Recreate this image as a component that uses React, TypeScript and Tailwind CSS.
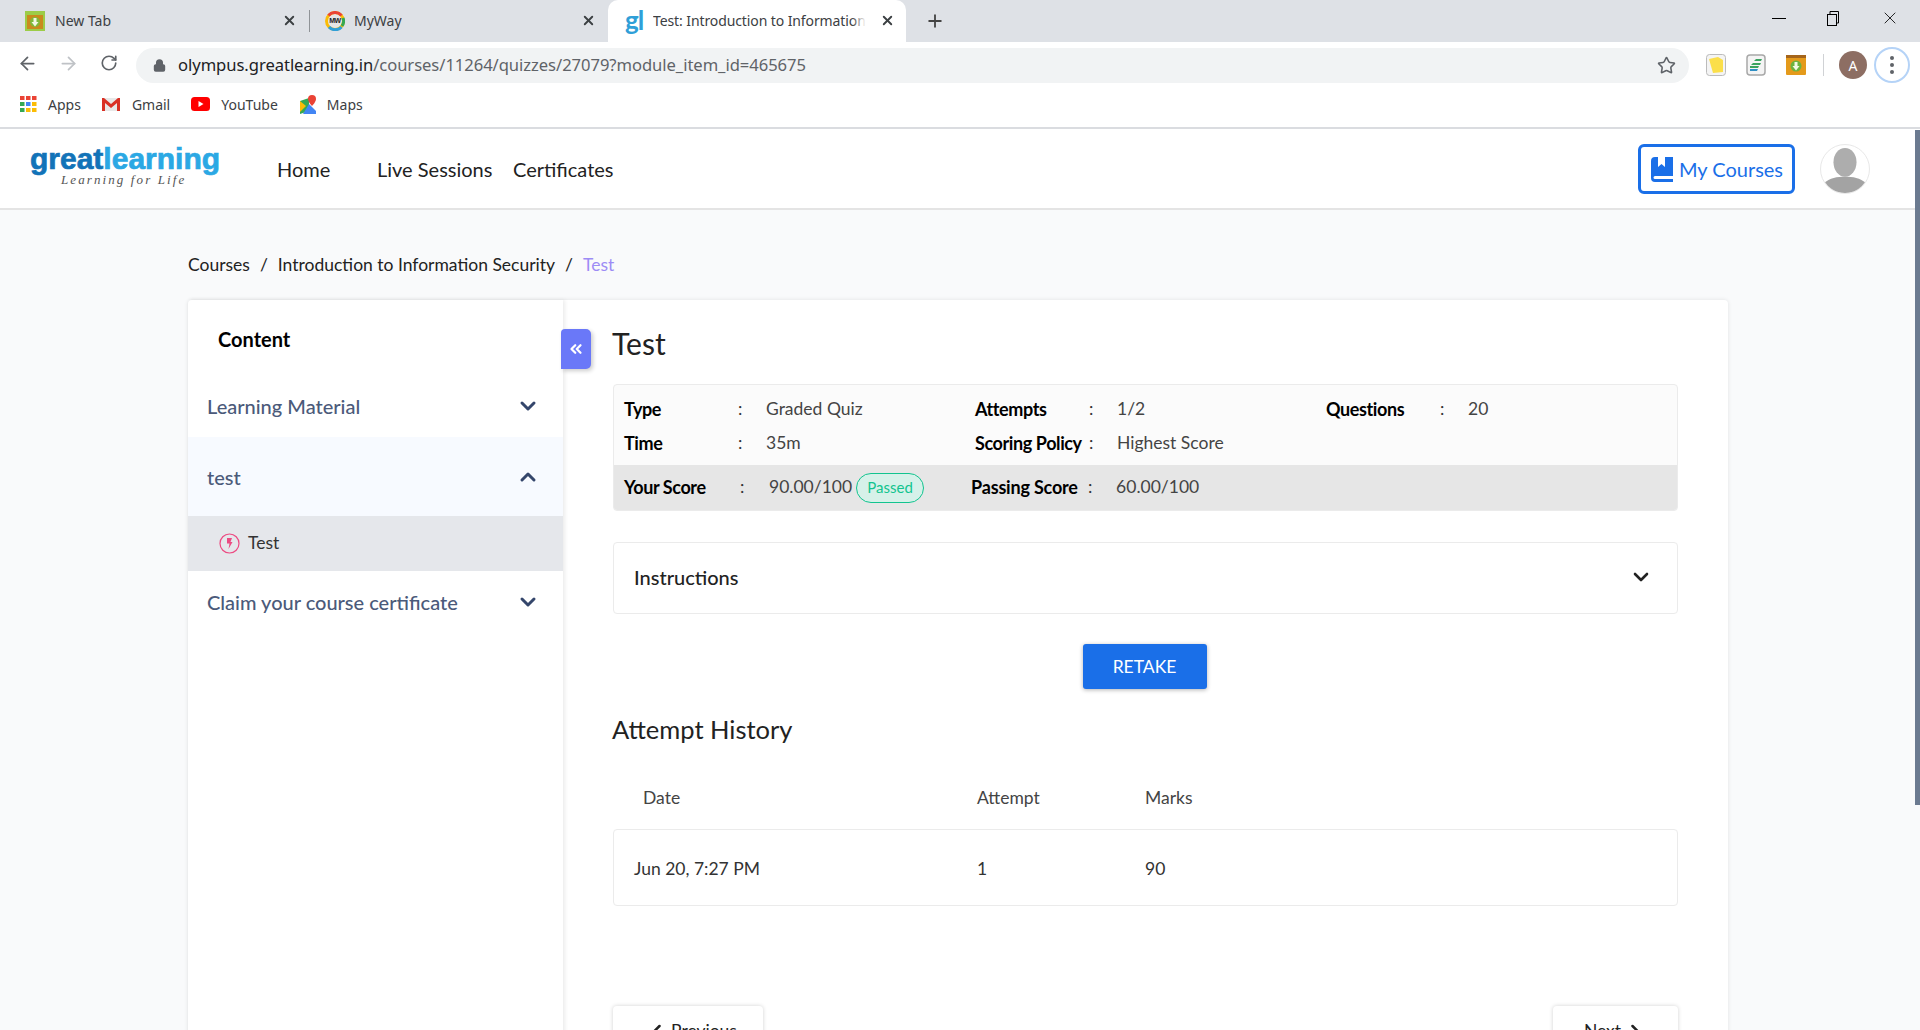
import { ChevronDown, ChevronLeft, ChevronRight, ChevronUp, ChevronsLeft, Lock, Plus, RotateCw, Star, ArrowLeft, ArrowRight, X } from "lucide-react";

function BrowserTab({ icon, title, width, close }: { icon: React.ReactNode; title: string; width: string; close: string }) {
  return (
    <div className={`relative flex h-full items-center ${width}`}>
      {icon}
      <span className="overflow-hidden whitespace-nowrap pb-[1px] text-[14px] text-[#3c4043]">{title}</span>
      <X size={15} strokeWidth={3} className={`absolute top-[13px] text-[#3c4043] ${close}`} />
    </div>
  );
}

function NewTabIcon() {
  return (
    <svg width="20" height="20" viewBox="0 0 20 20" className="ml-[25px] mr-[10px] shrink-0">
      <rect x="0" y="0" width="20" height="20" fill="#9ccc48" />
      <rect x="2" y="4" width="16" height="14" fill="#c98a1d" />
      <circle cx="10" cy="11" r="5" fill="#7fb83a" />
      <path d="M8.500 7h3v4h2L10 15.500 6.500 11h2z" fill="#f2f8e4" />
    </svg>
  );
}

function MyWayIcon() {
  return (
    <div className="relative ml-[15px] mr-[9px] flex h-[20px] w-[20px] shrink-0 items-center justify-center">
      <svg width="20" height="20" viewBox="0 0 20 20" className="absolute inset-0">
        <circle cx="10" cy="10" r="8.500" fill="#e6e6e6" stroke="#fbbc05" strokeWidth="3" />
        <path d="M3.500 4.500a8.500 8.500 0 0 1 13 0" fill="none" stroke="#ea4335" strokeWidth="3" />
        <path d="M18 7a8.500 8.500 0 0 1-1 8" fill="none" stroke="#34a853" strokeWidth="3" />
        <path d="M4 16a8.500 8.500 0 0 0 12.500 0" fill="none" stroke="#2f9fd8" strokeWidth="3" />
      </svg>
      <span className="relative font-['Liberation_Sans',sans-serif] text-[7px] font-bold tracking-[-0.5px] text-[#222]">MW</span>
    </div>
  );
}

function AppsIcon() {
  const colors = ["#ea4335", "#ea4335", "#ea4335", "#34a853", "#4285f4", "#fbbc05", "#34a853", "#fbbc05", "#fbbc05"];
  return (
    <div className="mr-[10px] grid h-[17px] w-[17px] grid-cols-3 gap-[1.500px]">
      {colors.map((c, i) => (
        <svg key={i} viewBox="0 0 4 4" className="h-[4.500px] w-[4.500px]">
          <rect width="4" height="4" fill={c} />
        </svg>
      ))}
    </div>
  );
}

function InfoCell({ label, value }: { label: string; value: string }) {
  return (
    <div className="flex h-[34px] w-[351px] items-center">
      <span className="w-[114px] text-[18px] font-bold tracking-[-0.4px] text-black">{label}</span>
      <span className="w-[28px] text-[17.500px] text-[#333]">:</span>
      <span className="text-[17.500px] text-[#444]">{value}</span>
    </div>
  );
}

function SectionRow({ title, open }: { title: string; open?: boolean }) {
  return (
    <div className={`flex items-center justify-between pl-[19px] pr-[23px] ${open ? "h-[79px] bg-[#f7faff]" : "h-[62px]"}`}>
      <span className="text-[20px] font-medium text-[#4b5a7a]">{title}</span>
      {open ? <ChevronUp size={24} strokeWidth={3} className="text-[#34466b]" /> : <ChevronDown size={24} strokeWidth={3} className="text-[#34466b]" />}
    </div>
  );
}

export default function App() {
  return (
    <div className="relative h-[1030px] w-[1920px] overflow-hidden bg-white font-['Lato',sans-serif]">
      {/* browser chrome */}
      <div className="font-['Noto_Sans',sans-serif]">
        <div className="flex h-[42px] bg-[#dee1e6]">
          <BrowserTab width="w-[309px]" icon={<NewTabIcon />} title="New Tab" close="left-[282px]" />
          <div className="my-[10px] w-px bg-[#8f9397]" />
          <BrowserTab width="w-[298px]" icon={<MyWayIcon />} title="MyWay" close="left-[271px]" />
          <div className="relative flex h-full w-[298px] items-center rounded-t-[10px] bg-white pl-[17px]">
            <span className="mb-[3px] mr-[10px] w-[18px] font-['Lato',sans-serif] text-[26px] font-bold leading-none tracking-[-1px] text-[#2f9fd8]">gl</span>
            <span className="w-[213px] overflow-hidden whitespace-nowrap pb-[1px] text-[14px] tracking-[-0.1px] text-[#3c4043]">Test: Introduction to Information Security</span>
            <div className="absolute left-[244px] top-0 h-full w-[14px] bg-gradient-to-r from-white/0 to-white" />
            <X size={15} strokeWidth={3} className="absolute left-[272px] top-[13px] text-[#3c4043]" />
          </div>
          <Plus size={20} strokeWidth={2.200} className="ml-[19px] mt-[11px] text-[#444]" />
          <div className="ml-auto flex items-center gap-[38px] pb-[6px] pr-[20px] text-[#222]">
            <div className="h-px w-[14px] bg-black" />
            <svg width="18" height="18" viewBox="0 0 18 18" fill="none" stroke="black">
              <rect x="3.500" y="5.500" width="9" height="11" />
              <path d="M6 5V2.500h8.500V14H13" />
            </svg>
            <X size={20} strokeWidth={1} className="text-black" />
          </div>
        </div>
        <div className="flex h-[42px] items-center">
          <ArrowLeft size={21} className="ml-[17px] text-[#5f6368]" />
          <ArrowRight size={21} className="ml-[20px] text-[#bfc2c6]" />
          <RotateCw size={18} strokeWidth={2.200} className="ml-[21px] text-[#5f6368]" />
          <div className="ml-[18px] mt-[4px] flex h-[35px] w-[1553px] items-center rounded-full bg-[#f1f3f4] pl-[17px] pr-[13px]">
            <Lock size={13} strokeWidth={3} className="text-[#5f6368]" fill="#5f6368" />
            <span className="ml-[12px] text-[16.600px] tracking-[-0.05px] text-[#202124]">
              olympus.greatlearning.in<span className="text-[#5f6368]">/courses/11264/quizzes/27079?module_item_id=465675</span>
            </span>
            <Star size={19} strokeWidth={2} className="ml-auto text-[#5f6368]" />
          </div>
          <div className="ml-[17px] mt-[4px] flex items-center">
            <svg width="20" height="22" viewBox="0 0 20 22">
              <rect x="0.500" y="0.500" width="19" height="21" rx="3" fill="#f4f4f4" stroke="#bbb" />
              <path d="M3 5l9-2 5 3 0 12-10 1z" fill="#fbdf4a" />
            </svg>
            <svg width="20" height="22" viewBox="0 0 20 22" className="ml-[20px]">
              <rect x="1" y="1" width="18" height="20" rx="3" fill="#f4f4f4" stroke="#a8a8a8" strokeWidth="1.500" />
              <path d="M10 5h6l-1 2H8zM7 9h8l-1 2H5zM4 12h9l-1 2H4z" fill="#3aa35f" />
              <path d="M4 15h8l-1 2H4z" fill="#2f8fc4" />
            </svg>
            <svg width="20" height="20" viewBox="0 0 20 20" className="ml-[20px]">
              <rect width="20" height="20" rx="1" fill="#e49a1b" />
              <rect y="0" width="20" height="3" fill="#a5651b" />
              <circle cx="10" cy="11" r="5.500" fill="#6db33f" />
              <path d="M8.500 7h3v4h2L10 15.500 6.500 11h2z" fill="#f3f9e6" />
            </svg>
            <div className="ml-[17px] h-[22px] w-px bg-[#d0d2d5]" />
            <div className="ml-[15px] flex h-[28px] w-[28px] items-center justify-center rounded-full bg-[#8d6e63] text-[14px] text-white">A</div>
            <div className="ml-[7px] flex h-[36px] w-[36px] flex-col items-center justify-center gap-[3px] rounded-full border-2 border-[#b5d3f7]">
              <div className="h-[4px] w-[4px] rounded-full bg-[#5f6368]" />
              <div className="h-[4px] w-[4px] rounded-full bg-[#5f6368]" />
              <div className="h-[4px] w-[4px] rounded-full bg-[#5f6368]" />
            </div>
          </div>
        </div>
        <div className="flex h-[45px] items-center border-b-2 border-[#dadce0] pb-[3px] pl-[20px] text-[14px] text-[#3c4043]">
          <AppsIcon />
          <span className="ml-[1px]">Apps</span>
          <svg width="18" height="14" viewBox="0 0 18 14" className="ml-[21px]">
            <rect x="1" y="1" width="16" height="13" fill="#e8e8e8" />
            <path d="M0 14V1h2l7 6 7-6h2v13h-3V6L9 11 3 6v8z" fill="#d93025" />
          </svg>
          <span className="ml-[12px]">Gmail</span>
          <svg width="19" height="14" viewBox="0 0 19 14" className="ml-[21px]">
            <rect width="19" height="14" rx="3.500" fill="#f00" />
            <path d="M7.500 4v6l5-3z" fill="#fff" />
          </svg>
          <span className="ml-[11px]">YouTube</span>
          <svg width="18" height="19" viewBox="0 0 18 19" className="ml-[21px]">
            <path d="M1 6l9-3v13l-9 3z" fill="#34a853" />
            <path d="M10 9l7 7v3H4z" fill="#4285f4" />
            <path d="M1 6l6 5-6 6z" fill="#fbbc05" />
            <path d="M13 0a4 4 0 0 1 4 4c0 3-4 7-4 7S9 7 9 4a4 4 0 0 1 4-4z" fill="#ea4335" />
          </svg>
          <span className="ml-[10px]">Maps</span>
        </div>
      </div>

      {/* site header */}
      <header className="flex h-[81px] items-center border-b-2 border-[#e4e4e4] pl-[30px] pt-[1px]">
        <div className="mb-[4px] flex w-[247px] flex-col">
          <div className="font-['Liberation_Sans',sans-serif] text-[30px] font-bold leading-[22px] tracking-[0px] [-webkit-text-stroke:0.7px_currentColor]">
            <span className="text-[#1273b8]">great</span>
            <span className="text-[#2ba8e4]">learning</span>
          </div>
          <div className="ml-[31px] mt-[3px] font-['Liberation_Serif',serif] text-[13px] italic leading-[14px] tracking-[2.100px] text-[#555]">Learning for Life</div>
        </div>
        <nav className="flex text-[20px] text-[#222]">
          <span className="w-[100px]">Home</span>
          <span className="w-[136px]">Live Sessions</span>
          <span>Certificates</span>
        </nav>
        <div className="ml-auto mr-[50px] flex items-center gap-[25px]">
          <div className="flex h-[50px] w-[157px] items-center gap-[6px] rounded-[6px] border-[3px] border-[#1a6fe8] pl-[10px] text-[20px] text-[#1a6fe8]">
            <svg width="22" height="25" viewBox="0 0 22 25" fill="#1a6fe8">
              <path d="M4 0h3v10l3.500-3 3.500 3V0H22v19H4a1.500 1.500 0 0 0 0 3h18v3H4a4 4 0 0 1-4-4V4a4 4 0 0 1 4-4z" />
            </svg>
            My Courses
          </div>
          <div className="h-[50px] w-[50px] overflow-hidden rounded-full border border-[#e8e8e8]">
            <svg viewBox="0 0 50 50" className="h-full w-full">
              <ellipse cx="25" cy="18" rx="12" ry="15" fill="#adadad" />
              <path d="M3 40c6-6 14-7 22-7s16 1 22 7c-4 6-12 10-22 10S7 46 3 40z" fill="#a3a3a3" />
            </svg>
          </div>
        </div>
      </header>

      {/* page */}
      <div className="h-[820px] bg-[#f9fafb] pl-[188px]">
        <div className="flex h-[90px] items-center gap-[10px] pt-[21px] text-[17.500px] text-[#222]">
          <span>Courses</span>
          <span>/</span>
          <span>Introduction to Information Security</span>
          <span>/</span>
          <span className="text-[#9d8cf5]">Test</span>
        </div>

        <div className="flex h-[800px] w-[1540px] rounded-[4px] bg-white shadow-[0_0_4px_rgba(0,0,0,0.1)]">
          <aside className="relative w-[375px] shrink-0 shadow-[2px_0_4px_rgba(0,0,0,0.08)]">
            <div className="flex h-[75px] items-center pl-[30px] pt-[3px] text-[20px] font-bold text-black">Content</div>
            <SectionRow title="Learning Material" />
            <SectionRow title="test" open />
            <div className="flex h-[55px] items-center bg-[#e5e7eb] pl-[31px] text-[17.500px] text-[#333]">
              <svg width="21" height="21" viewBox="0 0 21 21" className="mr-[8px]">
                <circle cx="10.500" cy="10.500" r="9.500" fill="none" stroke="#ec4a82" strokeWidth="1.200" />
                <path d="M8 5h5l-1.500 4h2l-4 7 1-5.500H8z" fill="#ec4a82" />
              </svg>
              Test
            </div>
            <SectionRow title="Claim your course certificate" />
            <div className="absolute left-[373px] top-[29px] flex h-[40px] w-[30px] items-center justify-center rounded-r-[5px] rounded-tl-[4px] bg-[#6a78f8] shadow-[2px_2px_4px_rgba(0,0,0,0.2)]">
              <ChevronsLeft size={18} strokeWidth={3} className="text-white" />
            </div>
          </aside>

          <main className="w-[1165px] pl-[50px] pr-[50px]">
            <h1 className="-ml-[1px] flex h-[84px] items-center pt-[3px] text-[30px] text-[#222]">Test</h1>

            <div className="overflow-hidden rounded-[4px] border border-[#ebebeb] bg-[#fbfbfb]">
              <div className="pb-[5px] pl-[10px] pt-[7px]">
                <div className="flex">
                  <InfoCell label="Type" value="Graded Quiz" />
                  <InfoCell label="Attempts" value="1/2" />
                  <InfoCell label="Questions" value="20" />
                </div>
                <div className="flex">
                  <InfoCell label="Time" value="35m" />
                  <InfoCell label="Scoring Policy" value="Highest Score" />
                </div>
              </div>
              <div className="flex h-[45px] items-center bg-[#e6e6e6] pl-[10px] text-[17.500px]">
                <span className="w-[116px] text-[18px] font-bold tracking-[-0.4px] text-black">Your Score</span>
                <span className="w-[29px] text-[#333]">:</span>
                <span className="text-[#444]">90.00/100</span>
                <span className="ml-[4px] flex h-[30px] w-[68px] items-center justify-center rounded-full border border-[#12c48f] bg-[#d6f1e9] text-[15px] text-[#12c48f]">Passed</span>
                <span className="ml-[47px] w-[117px] text-[18px] font-bold tracking-[-0.2px] text-black">Passing Score</span>
                <span className="w-[28px] text-[#333]">:</span>
                <span className="text-[#444]">60.00/100</span>
              </div>
            </div>

            <div className="mt-[31px] flex h-[72px] items-center justify-between rounded-[4px] border border-[#ebebeb] pb-[2px] pl-[20px] pr-[24px]">
              <span className="text-[20px] font-medium text-[#222]">Instructions</span>
              <ChevronDown size={24} strokeWidth={2.600} className="text-[#222]" />
            </div>

            <div className="mt-[30px] flex justify-center pr-[2px]">
              <button type="button" className="h-[45px] w-[124px] rounded-[3px] bg-[#1a6fe8] pt-[1px] text-[17.500px] text-white shadow-[0_1px_4px_rgba(0,0,0,0.3)]">RETAKE</button>
            </div>

            <h2 className="-ml-[1px] mt-[22px] text-[25.500px] leading-[36px] text-[#222]">Attempt History</h2>

            <div className="mt-[24px] flex h-[58px] items-center pb-[4px] text-[17.500px] text-[#444]">
              <span className="ml-[30px] w-[334px]">Date</span>
              <span className="w-[168px]">Attempt</span>
              <span>Marks</span>
            </div>
            <div className="flex h-[77px] items-center rounded-[4px] border border-[#ebebeb] pt-[3px] text-[17.500px] text-[#333]">
              <span className="ml-[20px] w-[343px]">Jun 20, 7:27 PM</span>
              <span className="w-[168px]">1</span>
              <span>90</span>
            </div>

            <div className="mt-[100px] flex justify-between">
              <div className="flex h-[50px] w-[150px] items-center justify-center gap-[4px] rounded-[4px] bg-white pl-[8px] text-[17.500px] text-[#222] shadow-[0_0_4px_rgba(0,0,0,0.18)]">
                <ChevronLeft size={20} strokeWidth={3} />
                Previous
              </div>
              <div className="flex h-[50px] w-[125px] items-center justify-center gap-[4px] rounded-[4px] bg-white pr-[2px] text-[17.500px] text-[#222] shadow-[0_0_4px_rgba(0,0,0,0.18)]">
                Next
                <ChevronRight size={20} strokeWidth={3} />
              </div>
            </div>
          </main>
        </div>
      </div>

      {/* page scrollbar */}
      <div className="absolute right-0 top-[130px] h-[675px] w-[5px] bg-[#6b7a90]" />
    </div>
  );
}
